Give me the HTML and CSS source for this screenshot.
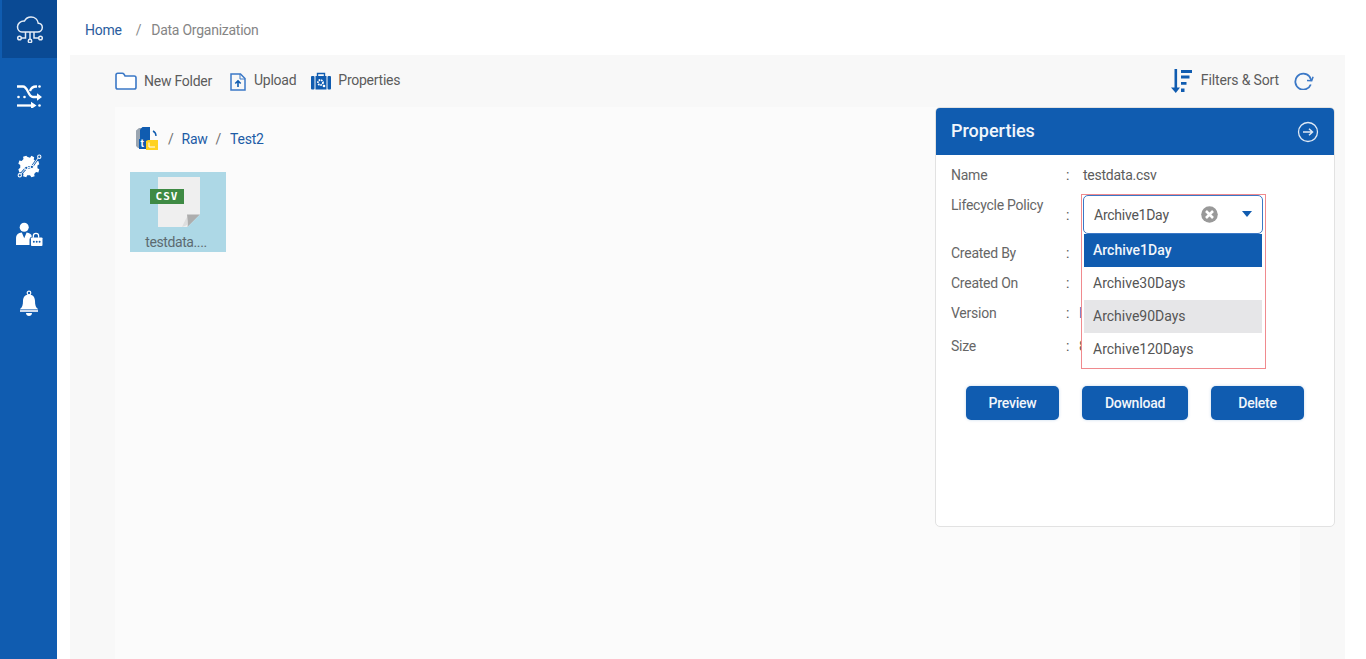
FILE: index.html
```html
<!DOCTYPE html>
<html lang="en">
<head>
<meta charset="utf-8">
<title>Data Organization</title>
<link rel="stylesheet" href="styles.css">
</head>
<body>
<aside class="sidebar">
  <div class="nav-item nav-active">
    <svg width="28" height="27" viewBox="0 0 28 27" fill="none" stroke="#e4ecf6" stroke-width="1.500">
      <path d="M6 16h15.500c2.800 0 4.800-2 4.800-4.400 0-2.300-1.700-4.100-4-4.300C21.800 3.700 18.800 1 15 1c-3 0-5.300 1.600-6.500 4C4.600 4.800 1.500 7.400 1.500 10.800 1.500 13.800 3.500 16 6 16z"/>
      <path d="M9.500 16v6H5.500M18 16v6h4.500M14 16v7"/>
      <circle cx="3.500" cy="22" r="1.800"/><circle cx="24.500" cy="22" r="1.800"/><circle cx="14" cy="25" r="1.700"/>
    </svg>
  </div>
  <div class="nav-item nav-shift">
    <svg width="25" height="23" viewBox="0 0 25 23" fill="none" stroke="#fff" stroke-width="2.300">
      <path d="M0 1.500h6c5 0 5 10.500 10 10.500h5"/>
      <path d="M13 6c1-2.800 3-4.500 6-4.500h1"/>
      <path d="M0 20.500h14"/>
      <path d="M20 8.300l5 3.700-5 3.700zM14 16.800l5.500 3.700-5.500 3.700z" fill="#fff" stroke="none"/>
      <circle cx="22.500" cy="1.500" r="1.300" fill="#fff" stroke="none"/>
      <circle cx="1.500" cy="12" r="1.300" fill="#fff" stroke="none"/>
      <circle cx="7.500" cy="12" r="1.300" fill="#fff" stroke="none"/>
      <circle cx="22.500" cy="20.500" r="1.300" fill="#fff" stroke="none"/>
    </svg>
  </div>
  <div class="nav-item nav-shift">
    <svg width="26" height="26" viewBox="0 0 28 28">
      <path fill="#fff" d="M11 4l3 1 1.500-2 3 1.500-.5 2.500 2.500 2 2.500-.5 1 3.500-2 1.500v3l2 1-1 3.500-2.500-.5-2 2 .5 2.500-3.500 1-1.500-2-3 0-1 2-3.500-1 .5-2.500-2-2-2.500.5-1-3.500 2-1.500v-3l-2-1.500 1-3.500 2.500.5 2-2-.5-2.500 3.500-1z"/>
      <path fill="none" stroke="#105cb0" stroke-width="2.600" d="M3 24l7-8 6-1 7-10"/>
      <path fill="none" stroke="#fff" stroke-width="1" d="M3 24l7-8 6-1 7-10"/>
      <g fill="#105cb0" stroke="#fff" stroke-width="1.100"><circle cx="3" cy="24" r="1.800"/><circle cx="10" cy="16" r="1.800"/><circle cx="16" cy="15" r="1.800"/><circle cx="24" cy="4" r="1.800"/></g>
    </svg>
  </div>
  <div class="nav-item nav-shift">
    <svg width="27" height="25" viewBox="0 0 28 26">
      <circle cx="8.500" cy="5.500" r="4.700" fill="#fff"/>
      <path fill="#fff" d="M0 24v-7c0-4 2.500-5.500 6-6l2.500 6 2.500-6c3 .4 5 1.500 5.500 4-1.500.5-2.500 2-2.500 3.500V24z"/>
      <path fill="none" stroke="#fff" stroke-width="1.300" d="M18 16.500v-2c0-3.500 5.500-3.500 5.500 0v2"/>
      <rect x="15.500" y="16" width="12" height="9" rx="1" fill="#fff"/>
      <g fill="#105cb0"><circle cx="18.500" cy="20.500" r="1"/><circle cx="21.500" cy="20.500" r="1"/><circle cx="24.500" cy="20.500" r="1"/></g>
    </svg>
  </div>
  <div class="nav-item">
    <svg width="20" height="28" viewBox="0 0 20 28">
      <circle cx="10" cy="3" r="1.800" fill="none" stroke="#fff" stroke-width="1.200"/>
      <path fill="#fff" d="M10 4.500c-3.800 0-6 2.800-6 6.500 0 4-.8 6.500-3 8h18c-2.200-1.500-3-4-3-8 0-3.700-2.200-6.500-6-6.500z"/>
      <path fill="#cfdcee" d="M1 19.500h18V22H1z"/>
      <path fill="#fff" d="M7 23h6c0 4-6 4-6 0z"/>
    </svg>
  </div>
</aside>

<div class="main">
  <nav class="topbar">
    <a class="top-home">Home</a>
    <span class="top-sep">/</span>
    <span class="top-current">Data Organization</span>
  </nav>

  <section class="content">
    <div class="toolbar">
      <div class="tool tool-folder">
        <svg width="22" height="18" viewBox="0 0 22 18" fill="#fff" stroke="#3b78c6" stroke-width="1.600">
          <path d="M1 3c0-1 .7-1.800 1.800-1.800h4.400c.9 0 1.400.4 1.800 1L10 4h9.200C20.300 4 21 4.800 21 5.800v9.400c0 1-.7 1.800-1.800 1.800H2.800C1.700 17 1 16.200 1 15.200z"/>
        </svg>
        <span>New Folder</span>
      </div>
      <div class="tool tool-upload">
        <svg width="16" height="18" viewBox="0 0 16 18" fill="none" stroke="#3b78c6" stroke-width="1.500">
          <path d="M1 1h9.500L15 5.500V17H1z"/>
          <path d="M10 1v5h5" stroke-width="1"/>
          <path d="M8 14V8M5.300 10.500L8 7.800l2.700 2.700" stroke="#105cb0" stroke-width="1.600"/>
        </svg>
        <span>Upload</span>
      </div>
      <div class="tool tool-props">
        <svg width="20" height="18" viewBox="0 0 20 18">
          <path fill="none" stroke="#105cb0" stroke-width="1.400" d="M6.500 4V1.500h7V4"/>
          <rect x="0" y="4" width="3.500" height="13.500" rx="1" fill="#105cb0"/>
          <rect x="16.500" y="4" width="3.500" height="13.500" rx="1" fill="#105cb0"/>
          <rect x="4.500" y="4" width="11" height="13.500" fill="#105cb0"/>
          <circle cx="9.500" cy="10.500" r="2.500" fill="none" stroke="#fff" stroke-width="1.800" stroke-dasharray="1.600 .8"/>
          <circle cx="13" cy="14" r="1.300" fill="#fff"/>
        </svg>
        <span>Properties</span>
      </div>
      <div class="tool-right">
        <svg class="sort-icon" width="22" height="24" viewBox="0 0 22 24" fill="#105cb0">
          <path d="M4.500 0h2.600v18.500H10L5.800 24 1 18.500h3.500z"/>
          <path d="M11 1h11v3H11zM11 6.500h8.500v3H11zM11 13h5.500v2.800H11zM11 19.500h3.500V23H11z"/>
        </svg>
        <span class="filters-label">Filters &amp; Sort</span>
        <svg class="refresh-icon" width="20" height="18" viewBox="0 0 20 18" fill="none" stroke="#3b78c6" stroke-width="1.800">
          <path d="M16.800 12.500A8 8 0 1 1 15.500 4.500l1.800 3.700"/>
          <path d="M13 8.500l4.700.2 1.400-4" stroke-width="1.500"/>
        </svg>
      </div>
    </div>

    <div class="explorer">
      <div class="crumbs">
        <svg width="24" height="24" viewBox="0 0 24 24">
          <path fill="#9aa5b1" d="M0 3.500L3 1h5v20H2l-2-2z"/>
          <path fill="#105cb0" d="M4 2.500L6.500 0H14v16H4z"/>
          <path fill="#105cb0" d="M3 12h7v10H3z"/>
          <text class="crumb-t" x="4.500" y="20">t</text>
          <path fill="none" stroke="#105cb0" stroke-width="1.400" d="M17 4c2 1 3 3 3 5"/>
          <path fill="#ffd21f" d="M10 14l2-1h10v10H10z"/>
          <path fill="none" stroke="#fff" stroke-width="1" d="M13 15.500v4.500h6"/>
        </svg>
        <span class="crumb-sep crumb-sep-first">/</span>
        <a class="crumb-link">Raw</a>
        <span class="crumb-sep">/</span>
        <a class="crumb-link">Test2</a>
      </div>
      <div class="file-tile">
        <div class="file-doc">
          <span class="file-badge">CSV</span>
          <svg class="file-fold" width="18" height="18" viewBox="0 0 18 18">
            <path fill="#dedede" d="M0 18c3-6 4-9 6-11h3v5c-2 3-5 5-9 6z"/>
            <path fill="#adadad" d="M5 5.500h13L5.500 18c1-4 0-8-.5-12.500z"/>
            <path fill="#add8e6" d="M18 5.500V18H5.500z"/>
          </svg>
        </div>
        <div class="file-name">testdata....</div>
      </div>
    </div>

    <aside class="props">
      <header class="props-head">
        <h2>Properties</h2>
        <svg width="22" height="22" viewBox="0 0 22 22" fill="none" stroke="#dfe9f5" stroke-width="1.300">
          <circle cx="11" cy="11" r="9.500"/>
          <path d="M6 11h9.500M12 7.800l3.500 3.200-3.500 3.200" stroke-width="1.500"/>
        </svg>
      </header>
      <div class="props-body">
        <div class="row row-name"><span class="row-label">Name</span><span class="row-colon">:</span><span class="row-value">testdata.csv</span></div>
        <div class="row row-policy"><span class="row-label">Lifecycle Policy</span><span class="row-colon">:</span></div>
        <div class="row"><span class="row-label">Created By</span><span class="row-colon">:</span></div>
        <div class="row"><span class="row-label">Created On</span><span class="row-colon">:</span></div>
        <div class="row row-version"><span class="row-label">Version</span><span class="row-colon">:</span><span class="row-value value-hidden link">D</span></div>
        <div class="row row-size"><span class="row-label">Size</span><span class="row-colon">:</span><span class="row-value value-hidden">8</span></div>
        <div class="actions">
          <button class="btn btn-preview">Preview</button>
          <button class="btn btn-download">Download</button>
          <button class="btn btn-delete">Delete</button>
        </div>
      </div>

      <div class="dropdown">
        <div class="select">
          <span class="select-value">Archive1Day</span>
          <svg class="select-clear" width="17" height="17" viewBox="0 0 17 17">
            <circle cx="8.500" cy="8.500" r="8.300" fill="#999"/>
            <path d="M5 5l7 7M12 5l-7 7" stroke="#fff" stroke-width="2.600"/>
          </svg>
          <span class="select-caret"></span>
        </div>
        <ul class="options">
          <li class="option option-selected">Archive1Day</li>
          <li class="option">Archive30Days</li>
          <li class="option option-hover">Archive90Days</li>
          <li class="option">Archive120Days</li>
        </ul>
      </div>
    </aside>
  </section>
</div>
</body>
</html>
```
FILE: styles.css
```css
* { box-sizing: border-box; }
html, body { margin: 0; height: 659px; overflow: hidden; }
body {
  display: flex;
  background: #fff;
  font-family: Roboto, "Liberation Sans", sans-serif;
  font-size: 14px;
  letter-spacing: -0.25px;
  color: #5c5c5c;
}
.sidebar { width: 57px; flex: none; background: #105cb0; }
.nav-item { height: 69px; display: flex; align-items: center; justify-content: center; }
.nav-active { height: 58px; margin-left: 2px; background: #0a4a94; margin-bottom: 4px; }
.nav-shift { padding-left: 2px; }

.main { flex: 1; display: flex; flex-direction: column; min-width: 0; }
.topbar { height: 55px; flex: none; display: flex; align-items: center; padding: 5px 0 0 28px; }
.top-home { color: #2a5c9e; }
.top-sep { margin: 0 10px 0 14px; color: #8a8a8a; }
.top-current { color: #858585; }

.content { position: relative; flex: 1; margin: 0 21px 0 13px; background: #f8f8f8; display: flex; flex-direction: column; }
.toolbar { height: 52px; flex: none; display: flex; align-items: center; padding: 0 31px 0 45px; }
.tool { display: flex; align-items: center; gap: 8px; margin-right: 18px; }
.tool-folder { gap: 7px; }
.tool-upload { margin-right: 15px; }
.tool-props { gap: 7px; }
.tool-upload svg { margin-top: 1px; }
.tool span { position: relative; top: -1px; }
.tool-folder span { top: 0; }
.tool-right { margin-left: auto; display: flex; align-items: center; }
.filters-label { position: relative; top: -1px; letter-spacing: -0.14px; }
.sort-icon { margin-right: 9px; }
.refresh-icon { margin-left: 15px; }

.explorer { flex: 1; margin: 0 45px; background: #fbfbfb; padding: 20px 0 0 15px; }
.crumbs { height: 24px; display: flex; align-items: center; padding-left: 6px; }
.crumb-link { color: #1d5ca6; }
.crumb-sep { color: #707070; margin: 0 9px 0 8px; }
.crumb-sep-first { margin: 0 8px 0 8px; }
.crumb-t { font-size: 10px; font-weight: 700; fill: #fff; }
.file-tile { width: 96px; height: 80px; margin-top: 21px; background: #add8e6; display: flex; flex-direction: column; align-items: center; padding-top: 5px; }
.file-doc { position: relative; width: 42px; height: 50px; background: #efefef; margin-left: 2px; }
.file-badge { position: absolute; left: -8px; top: 12px; width: 34px; height: 15px; background: #3e8a44; color: #fff; font-family: "DejaVu Sans Mono", "Liberation Mono", monospace; font-weight: 700; font-size: 11px; line-height: 15px; text-align: center; letter-spacing: 1px; }
.file-fold { position: absolute; right: 0; bottom: 0; }
.file-name { margin: 5px 4px 0 0; color: #5c6a70; line-height: 20px; letter-spacing: -0.4px; }

.props { position: absolute; left: 865px; top: 52px; width: 400px; height: 420px; background: #fff; border: 1px solid #e2e2e2; border-radius: 5px; }
.props-head { height: 47px; background: #105cb0; border-radius: 4px 4px 0 0; display: flex; align-items: center; justify-content: space-between; padding: 0 15px 0 15px; }
.props-head h2 { margin: -2px 0 0; color: #f2f6fb; font-size: 18px; font-weight: 500; letter-spacing: 0; }
.props-body { padding: 5px 0 0 15px; }
.row { height: 30px; display: flex; align-items: center; color: #666; }
.row-label { width: 115px; flex: none; }
.row-colon { width: 17px; flex: none; color: #555; }
.row-value { color: #5c5c5c; }
.value-hidden { margin-left: -4px; }
.link { color: #2a6cc0; }
.row-policy { height: 48px; align-items: flex-start; }
.row-policy .row-label { margin-top: 7px; }
.row-policy .row-colon { margin-top: 17px; }
.row-size { height: 36px; }
.actions { display: flex; gap: 23px; padding: 22px 0 0 15px; }
.btn { height: 34px; border: 0; border-radius: 5px; background: #105cb0; color: #f2f6fb; font: 500 14px Roboto, "Liberation Sans", sans-serif; letter-spacing: -0.25px; box-shadow: 0 0 3px rgba(16,92,176,.25); padding: 0; }
.btn-preview, .btn-delete { width: 93px; }
.btn-download { width: 106px; }

.dropdown { position: absolute; left: 145px; top: 86px; width: 185px; height: 175px; border: 1px solid #f08a8e; background: #fff; padding: 0 2px 0 1px; }
.select { height: 39px; width: 180px; border: 1px solid #3b78c6; border-radius: 5px; display: flex; align-items: center; padding-left: 10px; color: #555; position: relative; background: #fff; }
.select-value { flex: 1; }
.select-clear { position: absolute; left: 117px; top: 10px; }
.select-caret { position: absolute; left: 158px; top: 15px; border: 5.5px solid transparent; border-top: 6px solid #105cb0; border-bottom: 0; }
.options { list-style: none; margin: 0 0 0 1px; padding: 0; width: 178px; letter-spacing: 0; }
.option { height: 33px; line-height: 33px; padding-left: 9px; color: #555; }
.option-selected { background: #105cb0; color: #f2f6fb; font-weight: 500; }
.option-hover { background: #e6e6e8; }
```
